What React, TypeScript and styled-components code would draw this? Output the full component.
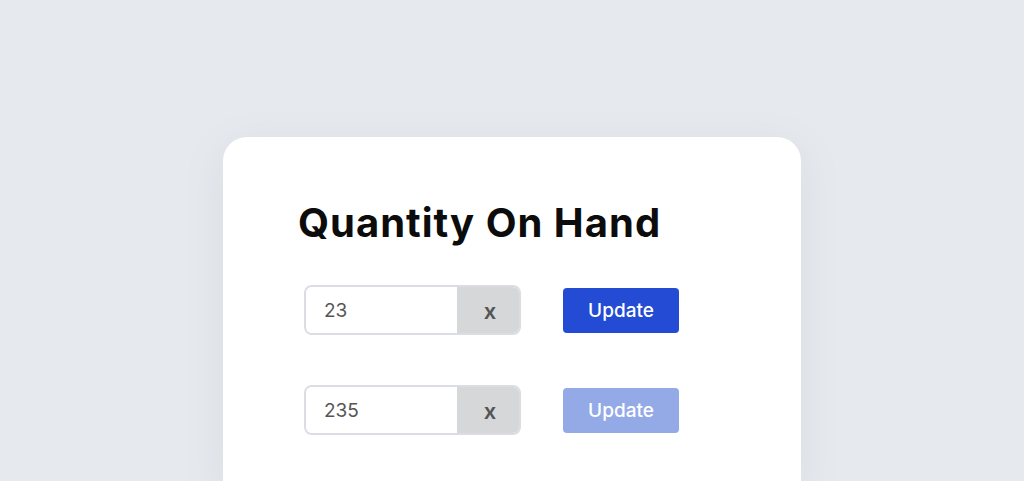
import styled, { createGlobalStyle } from 'styled-components'

const GlobalStyle = createGlobalStyle`
  html, body {
    margin: 0;
    padding: 0;
    background: #e6e9ee;
    overflow: hidden;
  }
  body {
    font-family: Inter, "Open Sans", sans-serif;
  }
`

interface Row {
  value: string
  active: boolean
}

const ROWS: Row[] = [
  { value: '23', active: true },
  { value: '235', active: false },
]

export default function App() {
  return (
    <>
      <GlobalStyle />
      <Page>
        <Card>
          <Title>Quantity On Hand</Title>
          <Rows>
            {ROWS.map((row) => (
              <QuantityRow key={row.value}>
                <InputGroup>
                  <ValueField>{row.value}</ValueField>
                  <ClearButton>x</ClearButton>
                </InputGroup>
                <UpdateButton $active={row.active}>Update</UpdateButton>
              </QuantityRow>
            ))}
          </Rows>
        </Card>
      </Page>
    </>
  )
}

const Page = styled.div`
  width: 1024px;
  height: 481px;
  padding-top: 137px;
  padding-left: 223px;
  box-sizing: border-box;
  overflow: hidden;
`

const Card = styled.div`
  width: 578px;
  height: 344px;
  background: #fff;
  border-radius: 24px 24px 0 0;
  box-shadow: 0 10px 40px rgba(120, 130, 150, 0.12);
  padding: 62px 0 0 75px;
  box-sizing: border-box;
`

const Title = styled.h1`
  margin: 0;
  font-size: 40px;
  line-height: 48px;
  font-weight: 700;
  color: #0c0c0c;
  letter-spacing: 1px;
`

const Rows = styled.div`
  display: flex;
  flex-direction: column;
  gap: 50px;
  margin-top: 38px;
  margin-left: 6px;
`

const QuantityRow = styled.div`
  display: flex;
  align-items: center;
  gap: 42px;
`

const InputGroup = styled.div`
  display: flex;
  width: 217px;
  height: 50px;
  border: 2px solid #dcdde3;
  border-radius: 8px;
  overflow: hidden;
  box-sizing: border-box;
`

const ValueField = styled.div`
  flex: 1;
  display: flex;
  align-items: center;
  padding-left: 18px;
  font-size: 19px;
  color: #555;
  background: #fff;
`

const ClearButton = styled.div`
  width: 62px;
  display: flex;
  align-items: center;
  justify-content: center;
  background: #d6d7d9;
  font-size: 22px;
  font-weight: 600;
  color: #555;
  padding: 2px 0 0 4px;
  box-sizing: border-box;
`

const UpdateButton = styled.button<{ $active: boolean }>`
  width: 116px;
  height: 45px;
  border: none;
  border-radius: 4px;
  background: ${(p) => (p.$active ? '#234bd3' : '#94aae6')};
  color: #fff;
  font-family: Inter, "Open Sans", sans-serif;
  font-size: 19px;
  font-weight: 500;
  padding: 0;
`
